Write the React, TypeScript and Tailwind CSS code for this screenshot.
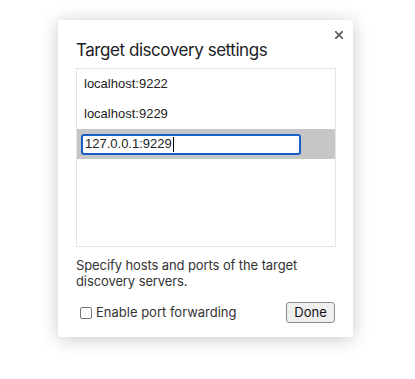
export default function App() {
  const hosts = ["localhost:9222", "localhost:9229"]
  return (
    <div className="w-[415px] h-[379px] bg-white pt-[20px] pl-[58px] font-['Liberation_Sans',Arial,sans-serif]">
      <div className="relative w-[295px] h-[317px] bg-white rounded-[3px] shadow-[0_2px_18px_rgba(0,0,0,0.22)] px-[18px] pt-[19px]">
        <button className="absolute top-[11px] right-[10px] w-[8px] h-[8px]">
          <svg width="8" height="8" viewBox="0 0 8 8" className="block">
            <path d="M0.8 0.8 L7.2 7.2 M7.2 0.8 L0.8 7.2" stroke="#616161" strokeWidth="1.9" strokeLinecap="square" />
          </svg>
        </button>
        <h1 className="text-[17px] leading-[22px] text-[#202124] font-['Inter',sans-serif] tracking-[-0.45px]">
          Target discovery settings
        </h1>
        <div className="mt-[7px] w-[260px] h-[179px] border border-[#e4e4e4] flex flex-col">
          {hosts.map((h) => (
            <div key={h} className="h-[30px] flex items-center px-[7px] text-[13px] text-[#222]">
              {h}
            </div>
          ))}
          <div className="h-[30px] flex items-center bg-[#c6c6c6] px-[4px]">
            <div className="w-[220px] h-[21px] bg-white border-2 border-[#1a5fc8] rounded-[3px] flex items-center px-[2px] text-[13px] text-[#222]">
              127.0.0.1:9229
              <span className="w-px h-[15px] bg-black ml-px" />
            </div>
          </div>
        </div>
        <p className="mt-[10px] text-[13px] leading-[16px] text-[#333] font-['Inter',sans-serif] tracking-[-0.1px] w-[250px]">
          Specify hosts and ports of the target discovery servers.
        </p>
        <div className="mt-[13px] flex items-center justify-between pl-[4px]">
          <label className="flex items-center gap-[4px] text-[13px] text-[#333] font-['Inter',sans-serif]">
            <span className="w-[12px] h-[12px] border border-[#767676] rounded-[2px] bg-white" />
            Enable port forwarding
          </label>
          <button className="w-[49px] h-[21px] border border-[#8c8c8c] rounded-[3px] bg-[#efefef] text-[13px] text-[#111] font-['Inter',sans-serif]">
            Done
          </button>
        </div>
      </div>
    </div>
  )
}
